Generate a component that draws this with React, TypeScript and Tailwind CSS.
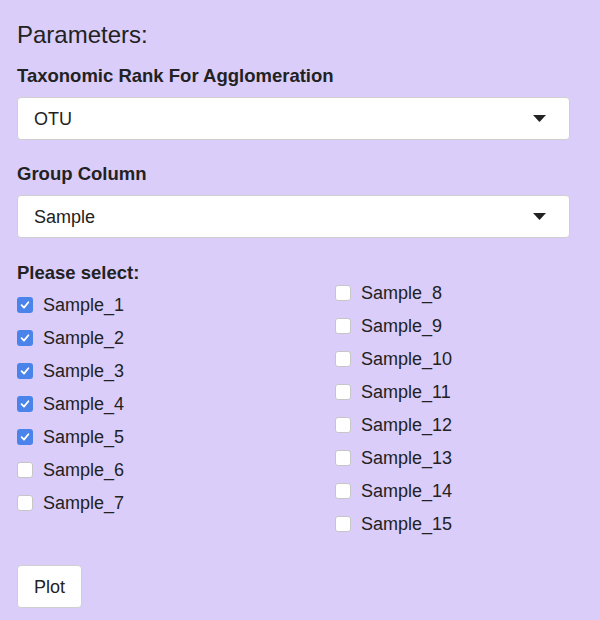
import React from "react";

const left = [1, 2, 3, 4, 5, 6, 7];
const right = [8, 9, 10, 11, 12, 13, 14, 15];
const checked = [1, 2, 3, 4, 5];

const Box = ({ on }: { on: boolean }) =>
  on ? (
    <span className="flex h-[16px] w-[16px] items-center justify-center rounded-[3px] bg-[#4a83ea]">
      <svg width="10" height="10" viewBox="0 0 10 10" fill="none">
        <path d="M1.6 5.2 L4 7.6 L8.4 2.2" stroke="white" strokeWidth="1.8" strokeLinecap="round" strokeLinejoin="round" />
      </svg>
    </span>
  ) : (
    <span className="h-[16px] w-[16px] rounded-[3px] border border-[#c6c6c6] bg-white" />
  );

const Row = ({ n }: { n: number }) => (
  <div className="flex h-[33px] items-center gap-[10px]">
    <Box on={checked.includes(n)} />
    <span className="text-[18px] leading-[22px]">Sample_{n}</span>
  </div>
);

const Select = ({ value }: { value: string }) => (
  <div className="mt-[10px] flex h-[43px] items-center justify-between rounded-[4px] border border-[#cfcfcf] bg-white pl-[16px] pr-[23px]">
    <span className="text-[18px] leading-[22px]">{value}</span>
    <svg width="13" height="7" viewBox="0 0 13 7">
      <path d="M0 0 H13 L6.5 7 Z" fill="#222" />
    </svg>
  </div>
);

export default function App() {
  return (
    <div className="min-h-[620px] bg-[#dacdfa] pl-[17px] pr-[30px] pt-[21px] font-['Liberation_Sans',Arial,sans-serif] text-[#222]">
      <h4 className="text-[24px] leading-[28px]">Parameters:</h4>
      <label className="mt-[16px] block text-[18.5px] font-bold leading-[22px]">
        Taxonomic Rank For Agglomeration
      </label>
      <Select value="OTU" />
      <label className="mt-[23px] block text-[18.5px] font-bold leading-[22px]">Group Column</label>
      <Select value="Sample" />
      <div className="mt-[24px] flex">
        <div className="w-[318px]">
          <label className="block text-[18.5px] font-bold leading-[22px]">Please select:</label>
          <div className="mt-[4px]">
            {left.map((n) => (
              <Row key={n} n={n} />
            ))}
          </div>
        </div>
        <div className="pt-[14px]">
          {right.map((n) => (
            <Row key={n} n={n} />
          ))}
        </div>
      </div>
      <button className="mt-[25px] h-[43px] w-[65px] rounded-[4px] border border-[#cfcfcf] bg-white text-[18px] leading-[22px]">
        Plot
      </button>
    </div>
  );
}
